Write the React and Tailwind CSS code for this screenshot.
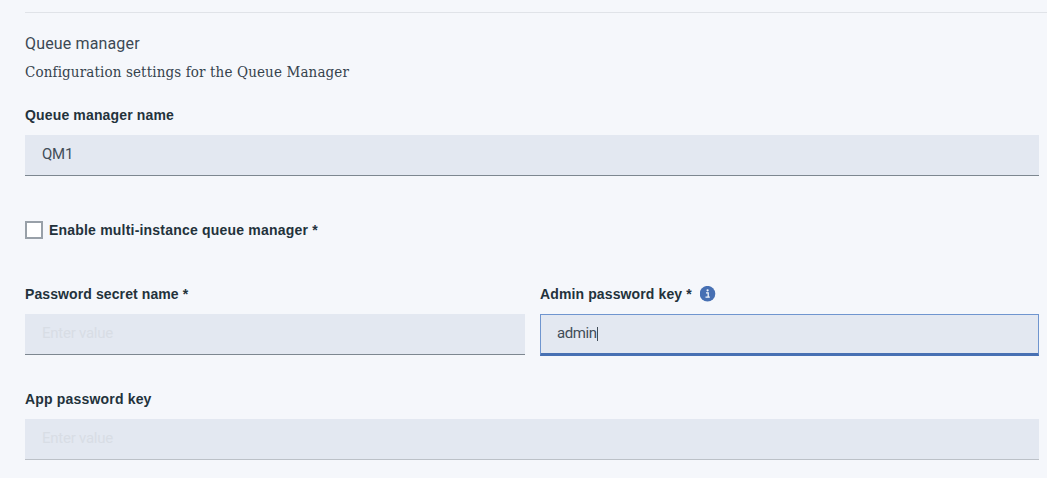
const label = "block h-5 font-['Liberation_Sans',sans-serif] text-[14px] leading-5 font-bold text-[#23323b] whitespace-pre";
const input = "block h-[41px] w-full border-b bg-[#e3e8f1] pr-4 pb-[2px] pl-[17px] font-['Roboto',sans-serif] text-[15px] tracking-[-0.25px] text-[#414d58] outline-none placeholder:text-[#d8dde5]";

function InfoIcon() {
  return (
    <svg className="ml-2 h-4 w-4" viewBox="0 0 16 16">
      <circle cx="7.5" cy="7.7" r="7.8" fill="#4770b3" />
      <path d="M6 6.8h2.2v4M5.5 11.1h4.3" fill="none" stroke="#f4f7fb" strokeWidth="1.3" />
      <circle cx="7.6" cy="4.3" r="1.1" fill="#f4f7fb" />
    </svg>
  );
}

export default function App() {
  return (
    <main className="h-[478px] overflow-hidden bg-[#f5f7fb] pt-3 pl-[25px]">
      <hr className="border-0 border-t border-[#e0e3e8]" />
      <div className="w-[1013.5px] pt-5">
        <h2 className="h-[22px] font-['Roboto',sans-serif] text-[16px] leading-[22px] font-normal tracking-[0.15px] text-[#3c4954]">
          <span>Queue manager</span>
        </h2>
        <p className="mt-1.5 h-[22px] font-['DejaVu_Serif_Condensed','DejaVu_Serif',serif] text-[15px] leading-[22px] tracking-[0.13px] text-[#35434d] [font-stretch:condensed]">
          <span>Configuration settings for the Queue Manager</span>
        </p>
        <label className="mt-[22px] block">
          <span className={`${label} tracking-[0.15px]`}>Queue manager name</span>
          <input className={`${input} mt-2.5 border-[#7d8790]`} defaultValue="QM1" />
        </label>
        <label className="mt-11 flex h-5 items-center gap-[6px]">
          <input type="checkbox" className="h-[18px] w-[18px] appearance-none border-2 border-[#98a0a8] bg-white" />
          <span className={`${label} tracking-[0.2px]`}>Enable multi-instance queue manager *</span>
        </label>
        <div className="mt-11 grid grid-cols-[499.5px_498.5px] gap-[15.5px]">
          <label>
            <span className={`${label} tracking-[0.1px]`}>Password secret name *</span>
            <input className={`${input} mt-2.5 border-[#7d8790]`} placeholder="Enter value" />
          </label>
          <div>
            <div className="flex items-center">
              <span className={`${label} tracking-[0.12px]`}>Admin password key *</span>
              <InfoIcon />
            </div>
            <div className="mt-2.5 flex h-[42px] items-center border border-b-[3px] border-[#6f95cf] border-b-[#4770b3] bg-[#e3e8f1] pb-[1px] pl-4 font-['Roboto',sans-serif] text-[15px] tracking-[-0.4px] text-[#414d58]">
              <span>admin</span>
              <span className="h-[14px] w-px bg-[#414d58]" />
            </div>
          </div>
        </div>
        <label className="mt-[33px] block">
          <span className={`${label} tracking-[0.18px]`}>App password key</span>
          <input className={`${input} mt-2.5 border-[#bcc1c8]`} placeholder="Enter value" />
        </label>
      </div>
    </main>
  );
}
